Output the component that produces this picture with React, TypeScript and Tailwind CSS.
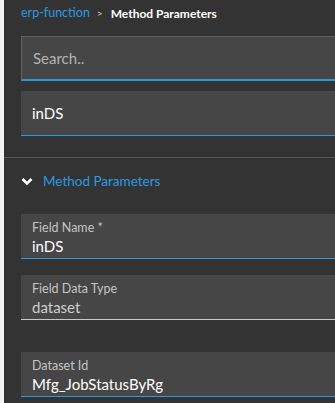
import React from "react";

const font = { fontFamily: "Lato, 'Noto Sans', sans-serif" };

function Field({ label, value, line, valueColor }: { label: string; value: string; line: string; valueColor: string }) {
  return (
    <div className={`w-[330px] h-[45px] bg-[#464646] border-b ${line} pl-[11px] pt-[6px]`}>
      <div className="text-[12.5px] leading-[16px] text-[#c4c4c4]">{label}</div>
      <div className={`text-[15px] leading-[20px] ${valueColor}`}>{value}</div>
    </div>
  );
}

export default function App() {
  return (
    <div className="w-[335px] h-[403px] flex overflow-hidden bg-[#f2f3f5]" style={font}>
      <div className="w-[4px] shrink-0" />
      <div className="flex-1 bg-[#333333] flex flex-col overflow-hidden">
        <div className="h-[27px] pl-[17px] flex items-center">
          <span className="text-[#2a9ae0] text-[12.5px]">erp-function</span>
          <span className="text-[#d0d0d0] text-[10px] ml-[7px] mr-[8px]">&gt;</span>
          <span className="text-white font-bold text-[12px]">Method Parameters</span>
        </div>
        <div className="pl-[17px] mt-[9px]">
          <div className="w-[330px] h-[45px] bg-[#464646] border-l border-t border-[#606060] border-b-2 border-b-[#2a9ae0] flex items-center pl-[11px] text-[15px] text-[#b4b4b4]">
            Search..
          </div>
        </div>
        <div className="pl-[17px] mt-[10px]">
          <div className="w-[330px] h-[45px] bg-[#464646] border-b border-[#2a9ae0] flex items-center pl-[11px] text-[15px] text-white">
            inDS
          </div>
        </div>
        <div className="mt-[21px] border-t border-[#585858]" />
        <div className="h-[44px] pl-[17px] flex items-center mt-[1px]">
          <svg width="12" height="9" viewBox="0 0 12 9">
            <path d="M1.5 2 L6 6.5 L10.5 2" stroke="#ffffff" strokeWidth="2.6" fill="none" />
          </svg>
          <span className="ml-[10px] text-[13.5px] text-[#2a9ae0]">Method Parameters</span>
        </div>
        <div className="pl-[17px] mt-[11px]">
          <Field label="Field Name *" value="inDS" line="border-[#2a9ae0]" valueColor="text-white" />
        </div>
        <div className="pl-[17px] mt-[16px]">
          <Field label="Field Data Type" value="dataset" line="border-[#c8c8c8]" valueColor="text-[#cfcfcf]" />
        </div>
        <div className="pl-[17px] mt-[32px]">
          <Field label="Dataset Id" value="Mfg_JobStatusByRg" line="border-[#2a9ae0]" valueColor="text-white" />
        </div>
      </div>
    </div>
  );
}
